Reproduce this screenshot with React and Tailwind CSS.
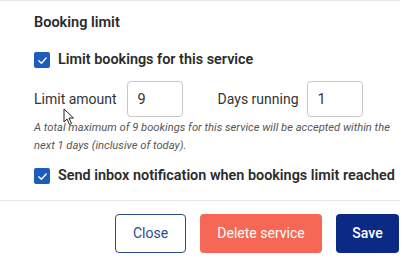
import React, { useState } from 'react';

const CheckRow = ({ checked, onToggle, label }) => (
    <label className="flex items-center h-[20px] cursor-pointer">
        <span
            onClick={onToggle}
            className={`w-[16px] h-[16px] rounded-[2px] flex items-center justify-center ${checked ? 'bg-[#1d5bbf]' : 'border border-gray-400 bg-white'}`}
        >
            {checked && (
                <svg width="11" height="11" viewBox="0 0 12 12" fill="none">
                    <path d="M2 6.3 L4.8 9 L10 3.2" stroke="white" strokeWidth="1.5" strokeLinecap="round" strokeLinejoin="round" />
                </svg>
            )}
        </span>
        <span className="ml-[8px] text-[14.4px] font-semibold text-[#2b2b2b]">{label}</span>
    </label>
);

const App = () => {
    const [limitOn, setLimitOn] = useState(true);
    const [notify, setNotify] = useState(true);
    const [amount, setAmount] = useState('9');
    const [days, setDays] = useState('1');

    return (
        <div className="relative w-[418px] h-[265px] bg-white font-['Roboto',sans-serif] text-[#333]">
            <div className="w-[400px] border-t border-[#e6e6e6]">
                <div className="pl-[34px] pt-[12px]">
                    <h3 className="text-[14.5px] leading-[20px] font-semibold text-[#2b2b2b]">Booking limit</h3>

                    <div className="mt-[17px]">
                        <CheckRow checked={limitOn} onToggle={() => setLimitOn(!limitOn)} label="Limit bookings for this service" />
                    </div>

                    <div className="mt-[11px] flex items-center">
                        <span className="text-[14px] text-[#333]">Limit amount</span>
                        <input
                            className="ml-[10px] w-[56px] h-[36px] border border-[#c8c8c8] rounded-[4px] px-[10px] text-[14.5px] text-[#333] outline-none"
                            value={amount}
                            onChange={(e) => setAmount(e.target.value)}
                        />
                        <span className="ml-[35px] text-[14px] text-[#333]">Days running</span>
                        <input
                            className="ml-[8px] w-[56px] h-[36px] border border-[#c8c8c8] rounded-[4px] px-[10px] text-[14.5px] text-[#333] outline-none"
                            value={days}
                            onChange={(e) => setDays(e.target.value)}
                        />
                    </div>

                    <p className="mt-[2px] w-[364px] text-[11.2px] leading-[18px] italic text-[#555]">
                        {`A total maximum of ${amount} bookings for this service will be accepted within the next ${days} days (inclusive of today).`}
                    </p>

                    <div className="mt-[11px]">
                        <CheckRow checked={notify} onToggle={() => setNotify(!notify)} label="Send inbox notification when bookings limit reached" />
                    </div>
                </div>

                <div className="mt-[14px] border-t border-[#e6e6e6]" />

                <div className="mt-[13px] flex justify-end gap-[14px] pr-[1px]">
                    <button className="w-[71px] h-[39px] rounded-[4px] border border-[#2c4a96] text-[#2c4a96] text-[14px] bg-white">
                        Close
                    </button>
                    <button className="w-[122px] h-[39px] rounded-[4px] bg-[#f76756] text-white text-[14px]">
                        Delete service
                    </button>
                    <button className="w-[63px] h-[39px] rounded-[4px] bg-[#0a2a85] text-white text-[14px] font-medium">
                        Save
                    </button>
                </div>
            </div>

            {/* mouse pointer */}
            <svg className="absolute left-[63px] top-[108px]" width="12" height="18" viewBox="0 0 12 18">
                <path d="M1 1 L1 14 L4 11 L6.5 16.5 L8.5 15.5 L6 10 L10.5 10 Z" fill="white" stroke="#222" strokeWidth="1" strokeLinejoin="round" />
            </svg>
        </div>
    );
};

export default App;
